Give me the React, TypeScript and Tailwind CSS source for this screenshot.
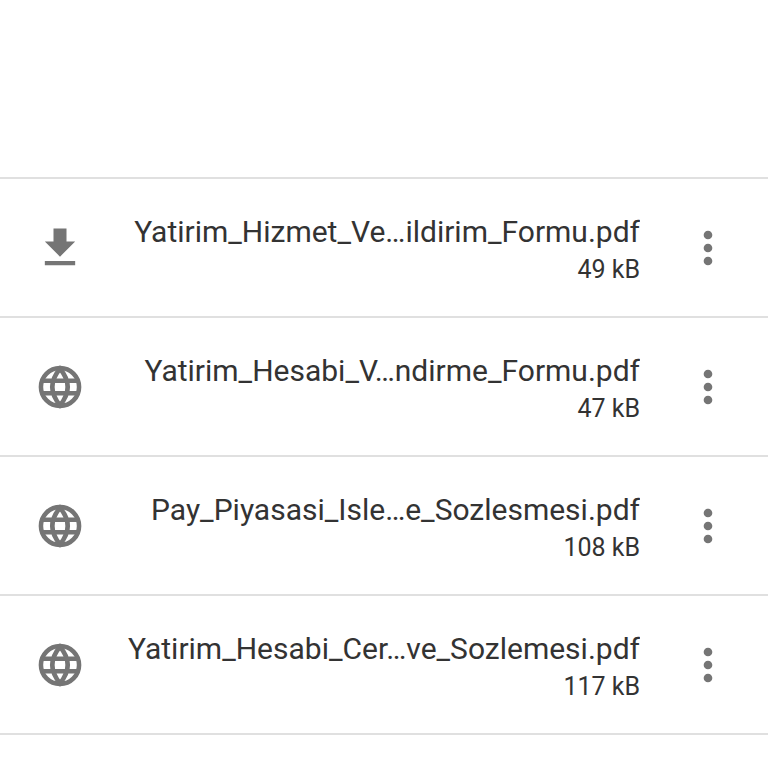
import { MdFileDownload, MdMoreVert } from "react-icons/md";

type PdfFile = {
    name: string;
    size: string;
    source: "download" | "web";
};

const files: PdfFile[] = [
    { name: "Yatirim_Hizmet_Ve…ildirim_Formu.pdf", size: "49 kB", source: "download" },
    { name: "Yatirim_Hesabi_V…ndirme_Formu.pdf", size: "47 kB", source: "web" },
    { name: "Pay_Piyasasi_Isle…e_Sozlesmesi.pdf", size: "108 kB", source: "web" },
    { name: "Yatirim_Hesabi_Cer…ve_Sozlemesi.pdf", size: "117 kB", source: "web" },
];

function GlobeIcon() {
    return (
        <svg viewBox="0 0 24 24" fill="none" stroke="currentColor" strokeWidth="2.1" className="size-[52px] shrink-0" aria-hidden="true">
            <circle cx="12" cy="12" r="8.8" />
            <path d="M12 3.6Q19.1 12 12 20.4Q4.9 12 12 3.6zM3.9 9.1h16.2M3.9 14.9h16.2" />
        </svg>
    );
}

function FileRow({ file }: { file: PdfFile }) {
    return (
        <li className="flex items-center border-b-2 border-[#e0e0e0] px-[34px] text-[#757575]">
            {file.source === "download" ? (
                <MdFileDownload className="size-[52px] shrink-0" aria-hidden="true" />
            ) : (
                <GlobeIcon />
            )}

            {/* Name and size */}
            <div className="min-w-0 flex-1 pt-[33px] pr-[42px] pb-7 text-right text-[#333333]">
                <p className="truncate text-[30px] leading-10">{file.name}</p>
                <p className="text-[25px] leading-9">{file.size}</p>
            </div>

            <button type="button" aria-label={`Options for ${file.name}`}>
                <MdMoreVert className="size-[52px]" aria-hidden="true" />
            </button>
        </li>
    );
}

export default function App() {
    return (
        <main className="min-h-screen bg-white pt-[177px] font-['Roboto',sans-serif]">
            <ul className="border-t-2 border-[#e0e0e0]">
                {files.map((file) => (
                    <FileRow key={file.name} file={file} />
                ))}
            </ul>
        </main>
    );
}
